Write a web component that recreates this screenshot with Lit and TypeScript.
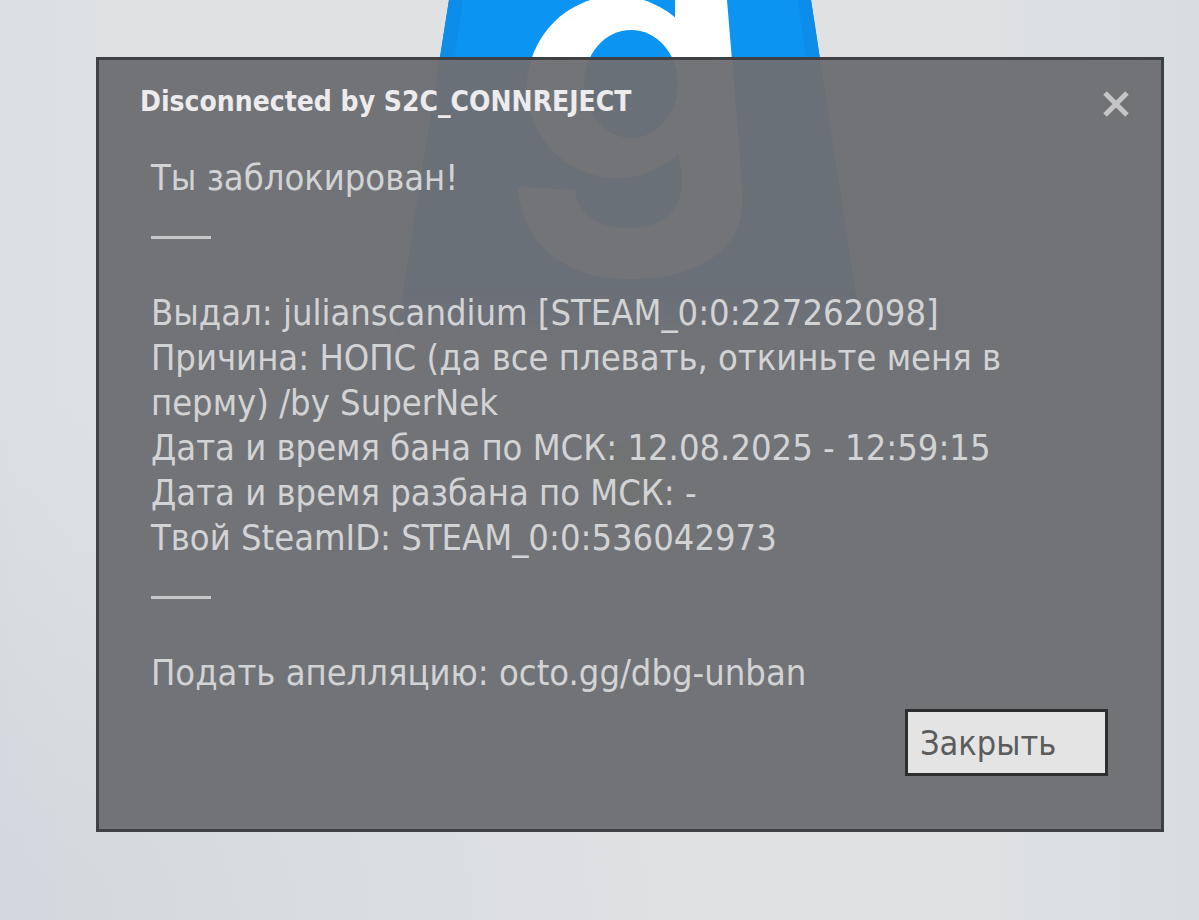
import { LitElement, html, css } from "lit";
import { customElement, state } from "lit/decorators.js";

@customElement("backdrop-logo")
class BackdropLogo extends LitElement {
  static styles = css`
    :host {
      display: block;
    }
    .art {
      display: block;
      width: 480px;
      height: 540px;
    }
  `;

  render() {
    return html`
      <svg class="art" viewBox="390 0 480 540" aria-hidden="true">
        <defs>
          <linearGradient id="fade" x1="0" y1="0" x2="0" y2="1">
            <stop offset="0.86" stop-color="#0b6fd0" />
            <stop offset="1" stop-color="#0b6fd0" stop-opacity="0.1" />
          </linearGradient>
          <filter id="soft" x="-20%" y="-20%" width="140%" height="140%">
            <feGaussianBlur stdDeviation="3" />
          </filter>
        </defs>
        <path d="M449 0H811L863 340H396Z" fill="url(#fade)" />
        <path d="M449 0H811L855 290H403Z" fill="#0b8de9" />
        <path d="M463 0H798L838 285H420Z" fill="#0b94f2" />
        <ellipse cx="617" cy="87" rx="90" ry="91" fill="#fff" />
        <path
          d="M675 0H727L738 133Q742 180 742 205C740 255 690 279 630 279C565 279 522 245 518 187L575 190C577 215 598 228 627 228C665 228 684 210 682 175L678 150L675 17Z"
          fill="#fff"
        />
        <ellipse cx="631" cy="84" rx="47" ry="54" fill="#0b94f2" />
        <path
          d="M588 462L650 428L664 470L676 500L612 516Z"
          fill="#a8a400"
          opacity="0.6"
          filter="url(#soft)"
        />
      </svg>
    `;
  }
}

@customElement("disconnect-dialog")
class DisconnectDialog extends LitElement {
  static styles = css`
    :host {
      display: block;
      position: relative;
    }
    .panel {
      display: flex;
      flex-direction: column;
      box-sizing: border-box;
      padding: 24px 53px 53px 41px;
      border: 3px solid #3e4043;
      background: rgba(110, 111, 115, 0.965);
      color: #d2d3d5;
    }
    .head {
      display: flex;
      justify-content: space-between;
      align-items: center;
      margin-right: -24px;
      height: 36px;
    }
    .title {
      margin: 0;
      font-size: 28px;
      line-height: 32px;
      font-weight: 700;
      color: #ececee;
    }
    .close {
      display: grid;
      place-items: center;
      align-self: flex-end;
      width: 32px;
      height: 32px;
      padding: 0;
      border: 0;
      background: none;
      color: #c4c5c4;
    }
    .cross {
      width: 28px;
      height: 28px;
    }
    .message {
      padding: 35px 16px 14px 11px;
      font-size: 36px;
      line-height: 45px;
    }
    .line {
      margin: 0;
    }
    .rule {
      width: 60px;
      height: 3px;
      margin: 36px 0 51px;
      border: 0;
      background: #c6c7c9;
    }
    .action {
      align-self: flex-end;
      width: 203px;
      height: 67px;
      padding: 0 12px;
      border: 3px solid #2c2e30;
      background: #e4e4e4;
      color: #5c5c5c;
      font: inherit;
      font-size: 34px;
      text-align: left;
    }
  `;

  private readonly details = [
    "Выдал: julianscandium [STEAM_0:0:227262098]",
    "Причина: НОПС (да все плевать, откиньте меня в перму) /by SuperNek",
    "Дата и время бана по МСК: 12.08.2025 - 12:59:15",
    "Дата и время разбана по МСК: -",
    "Твой SteamID: STEAM_0:0:536042973",
  ];

  private close() {
    this.dispatchEvent(new CustomEvent("dismiss"));
  }

  render() {
    return html`
      <section class="panel" role="dialog" aria-labelledby="title">
        <header class="head">
          <h1 class="title" id="title">Disconnected by S2C_CONNREJECT</h1>
          <button class="close" aria-label="Закрыть" @click=${this.close}>
            <svg class="cross" viewBox="0 0 28 28">
              <path d="M3 3L25 25M25 3L3 25" stroke="currentColor" stroke-width="5" fill="none" />
            </svg>
          </button>
        </header>
        <div class="message">
          <p class="line">Ты заблокирован!</p>
          <hr class="rule" />
          ${this.details.map((text) => html`<p class="line">${text}</p>`)}
          <hr class="rule" />
          <p class="line">Подать апелляцию: octo.gg/dbg-unban</p>
        </div>
        <button class="action" @click=${this.close}>Закрыть</button>
      </section>
    `;
  }
}

@customElement("app-root")
class AppRoot extends LitElement {
  static styles = css`
    :host {
      display: block;
      box-sizing: border-box;
      min-height: 100vh;
      padding: 57px 35px 48px 96px;
      background:
        radial-gradient(ellipse at 0% 100%, rgba(200, 207, 216, 0.5), transparent 40%),
        linear-gradient(90deg, #d9e0e3 0%, #dfe1e3 9%, #dfe1e3 82%, #d7dde1 100%);
      font-family: "DejaVu Sans Condensed", "Noto Sans", sans-serif;
    }
    .stage {
      position: relative;
    }
    .logo {
      position: absolute;
      top: -57px;
      left: 50%;
      transform: translateX(-50%);
    }
  `;

  @state() private open = true;

  render() {
    return html`
      <main class="stage">
        <backdrop-logo class="logo"></backdrop-logo>
        ${this.open
          ? html`<disconnect-dialog @dismiss=${() => (this.open = false)}></disconnect-dialog>`
          : null}
      </main>
    `;
  }
}
